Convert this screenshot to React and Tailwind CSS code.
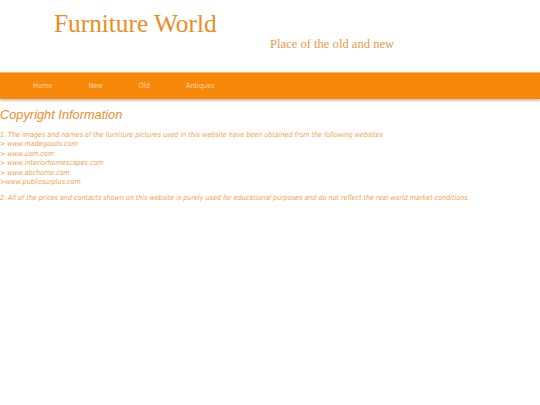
export default function App() {
  return (
    <div className="w-[540px] h-[405px] bg-white overflow-hidden font-['DejaVu_Sans_Condensed','DejaVu_Sans',Verdana,sans-serif]">
      <header className="h-[72px] font-['Liberation_Serif','Times_New_Roman',serif]">
        <h1 className="pl-[54px] pt-[9px] text-[25.3px] leading-[28px] text-[#ec8d25]">
          Furniture World
        </h1>
        <p className="pl-[270px] text-[12.6px] leading-[14px] text-[#eb9a45]">
          Place of the old and new
        </p>
      </header>
      <nav className="h-[27px] bg-[#f8880a] border-t border-[#f6b86e] shadow-[0_2px_2px_rgba(120,90,60,0.35)] flex items-center pl-[33px] gap-[36px] text-[7.3px] text-[#fcd6a8]">
        <span>Home</span>
        <span>New</span>
        <span>Old</span>
        <span>Antiques</span>
      </nav>
      <main className="pt-[8px]">
        <h2 className="text-[12.8px] leading-[16px] italic text-[#ee8e28] font-['Liberation_Sans',Arial,sans-serif]">
          Copyright Information
        </h2>
        <div className="mt-[7px] italic text-[7.1px] leading-[9.4px] text-[#f0a04a]">
          <p>1. The images and names of the furniture pictures used in this website have been obtained from the following websites</p>
          <p>&gt; www.madegoods.com</p>
          <p>&gt; www.usm.com</p>
          <p>&gt; www.interiorhomescapes.com</p>
          <p>&gt; www.abchome.com</p>
          <p>&gt;www.publicsurplus.com</p>
          <p className="mt-[6.5px]">2. All of the prices and contacts shown on this website is purely used for educational purposes and do not reflect the real world market conditions.</p>
        </div>
      </main>
    </div>
  );
}
